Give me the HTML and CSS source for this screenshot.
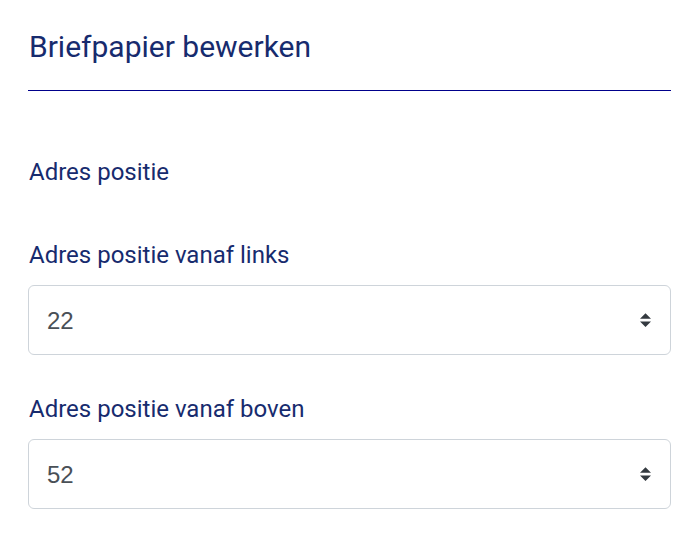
FILE: index.html
```html
<!DOCTYPE html>
<html lang="nl">

<head>
    <meta charset="UTF-8">
    <meta name="viewport" content="width=device-width, initial-scale=1.0">
    <title>Briefpapier bewerken</title>
    <link rel="stylesheet" href="styles.css">
</head>

<body>
    <div class="paneel">
        <h2 class="paneel-titel">Briefpapier bewerken</h2>

        <h3 class="sectie-titel">Adres positie</h3>

        <div class="veld">
            <label for="links">Adres positie vanaf links</label>
            <div class="keuze">
                <select id="links">
                    <option>22</option>
                </select>
            </div>
        </div>

        <div class="veld">
            <label for="boven">Adres positie vanaf boven</label>
            <div class="keuze">
                <select id="boven">
                    <option>52</option>
                </select>
            </div>
        </div>
    </div>
</body>

</html>
```

FILE: styles.css
```css
body {
    margin: 0;
    background-color: #fff;
    font-family: Roboto, "Noto Sans", sans-serif;
    color: #172b6e;
}

.paneel {
    padding: 0 29px 0 28px;
}

.paneel-titel {
    margin: 0;
    padding: 27px 0 23px 1px;
    font-size: 30px;
    font-weight: 400;
    line-height: 40px;
    border-bottom: 1px solid #00008b;
}

.sectie-titel {
    margin: 0;
    padding: 66px 0 0 1px;
    font-size: 24px;
    font-weight: 400;
    line-height: 30px;
}

.veld {
    margin-top: 53px;
}

.veld + .veld {
    margin-top: 39px;
}

.veld label {
    display: block;
    padding-left: 1px;
    font-size: 24px;
    line-height: 30px;
    margin-bottom: 15px;
}

.keuze {
    position: relative;
}

.keuze select {
    display: block;
    width: 100%;
    height: 70px;
    padding: 0 40px 0 18px;
    font-family: "Liberation Sans", Arial, sans-serif;
    font-size: 24px;
    color: #495057;
    background-color: #fff;
    border: 1px solid #ced4da;
    border-radius: 6px;
    appearance: none;
    -webkit-appearance: none;
}

.keuze::after {
    content: "";
    position: absolute;
    right: 20px;
    top: 50%;
    width: 11px;
    height: 14px;
    margin-top: -7px;
    background: url("data:image/svg+xml,%3csvg xmlns='http://www.w3.org/2000/svg' viewBox='0 0 4 5'%3e%3cpath fill='%23343a40' d='M2 0L0 2h4zm0 5L0 3h4z'/%3e%3c/svg%3e") no-repeat center / 11px 14px;
    pointer-events: none;
}
```
